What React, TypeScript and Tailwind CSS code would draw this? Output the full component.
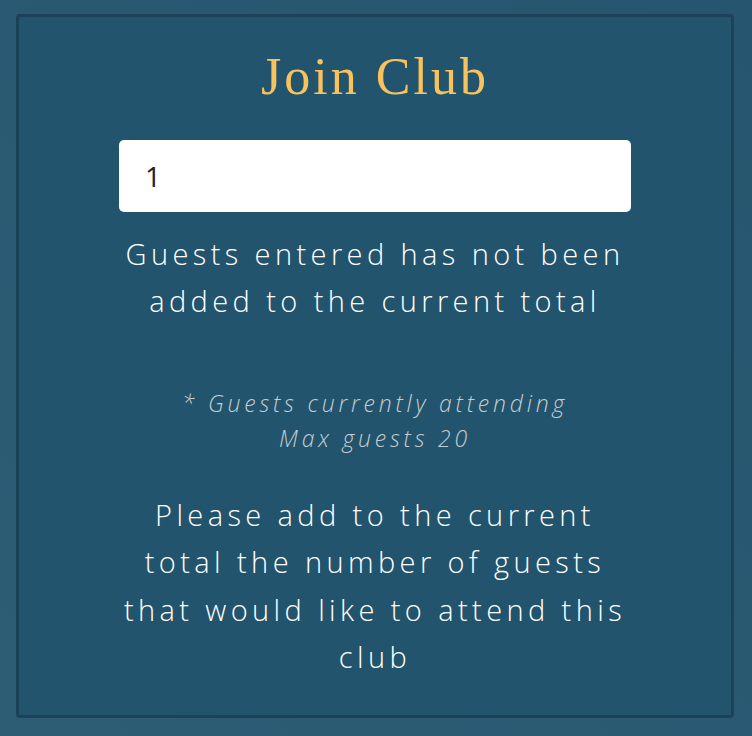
export default function App() {
  return (
    <div className="h-[736px] w-[752px] overflow-hidden bg-gradient-to-tr from-[#2d5c75] to-[#26566f] pt-[14px] pl-[16px]">
      <div className="flex h-[704px] w-[718px] flex-col items-center rounded-[4px] border-[3px] border-[#1c4259] bg-[#22546d] pt-[30px]">
        <h1 className="font-['Liberation_Serif',serif] text-[52px] leading-[60px] tracking-[3px] text-[#f8c25c]">
          Join Club
        </h1>
        <input
          type="text"
          defaultValue="1"
          className="mt-[33px] h-[72px] w-[512px] rounded-[5px] bg-white pl-[26px] font-['Open_Sans',sans-serif] text-[28px] text-[#222] outline-none"
        />
        <p className="mt-[18px] w-[520px] text-center font-['Open_Sans',sans-serif] text-[29px] font-light leading-[47px] tracking-[4.4px] text-white">
          Guests entered has not been added to the current total
        </p>
        <p className="mt-[62px] text-center font-['Open_Sans',sans-serif] text-[23px] italic font-light leading-[35px] tracking-[3.8px] text-[#c6ccd0]">
          * Guests currently attending
          <br />
          Max guests 20
        </p>
        <p className="mt-[35px] w-[520px] text-center font-['Open_Sans',sans-serif] text-[29px] font-light leading-[47.4px] tracking-[4.4px] text-white">
          Please add to the current total the number of guests that would like to attend this club
        </p>
      </div>
    </div>
  );
}
